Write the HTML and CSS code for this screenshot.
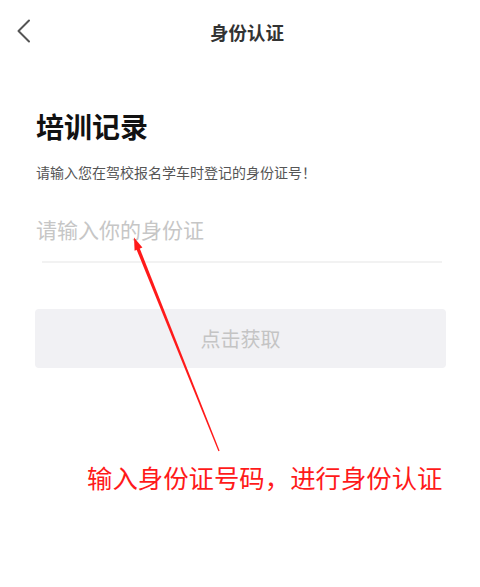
FILE: index.html
```html
<!DOCTYPE html>
<html lang="zh">
<head>
<meta charset="utf-8">
<title>身份认证</title>
<link rel="stylesheet" href="styles.css">
</head>
<body>
<div class="page">
  <header class="nav">
    <svg class="back" width="16" height="24" viewBox="0 0 16 24"><polyline points="13,1.5 2.5,12 13,22.5" fill="none" stroke="#555" stroke-width="2" stroke-linecap="round" stroke-linejoin="round"/></svg>
    <div class="nav-title">身份认证</div>
  </header>
  <main class="content">
    <h1 class="title">培训记录</h1>
    <p class="subtitle">请输入您在驾校报名学车时登记的身份证号！</p>
    <div class="field"><span class="placeholder">请输入你的身份证</span></div>
    <div class="field-line"></div>
    <div class="btn">点击获取</div>
    <p class="note">输入身份证号码，进行身份认证</p>
  </main>
  <svg class="arrow" width="480" height="587" viewBox="0 0 480 587">
    <polygon points="134,237.5 142.4,247.6 134.6,250.7" fill="#ff1a1a"/>
    <polygon points="139.6,248 136.4,249.2 218.4,451.2 219.6,450.8" fill="#ff1a1a"/>
  </svg>
</div>
</body>
</html>
```
FILE: styles.css
```css
html, body {
  margin: 0;
  padding: 0;
  background: #fff;
}
body {
  font-family: "Noto Sans CJK SC", "Noto Sans", sans-serif;
}
.page {
  position: relative;
  width: 480px;
  height: 587px;
  overflow: hidden;
}
.nav {
  height: 64px;
  display: flex;
  align-items: center;
  justify-content: center;
  position: relative;
}
.back {
  position: absolute;
  left: 16px;
  top: 19px;
}
.nav-title {
  font-size: 18.5px;
  font-weight: 700;
  color: #333;
  margin-left: 14px;
  line-height: 24px;
}
.content {
  padding: 0 34px 0 36px;
  display: flex;
  flex-direction: column;
}
.title {
  margin: 45px 0 0;
  font-size: 28px;
  font-weight: 700;
  line-height: 34px;
  color: #111;
}
.subtitle {
  margin: 19px 0 0;
  font-size: 14px;
  line-height: 20px;
  color: #555;
}
.field {
  margin-top: 33px;
  height: 28px;
  display: flex;
  align-items: center;
}
.placeholder {
  font-size: 21px;
  color: #c6c6c6;
  line-height: 28px;
}
.field-line {
  margin: 18px 4px 0 6px;
  height: 2px;
  background: #f2f2f2;
}
.btn {
  margin: 46px 0 0 -1px;
  height: 59px;
  width: 411px;
  background: #f1f1f4;
  border-radius: 4px;
  display: flex;
  align-items: center;
  justify-content: center;
  font-size: 20px;
  color: #c4c4c4;
}
.note {
  margin: 94px 0 0 51px;
  font-size: 25.4px;
  line-height: 30px;
  color: #ff1a1a;
  white-space: nowrap;
}
.arrow {
  position: absolute;
  left: 0;
  top: 0;
  pointer-events: none;
}
```
